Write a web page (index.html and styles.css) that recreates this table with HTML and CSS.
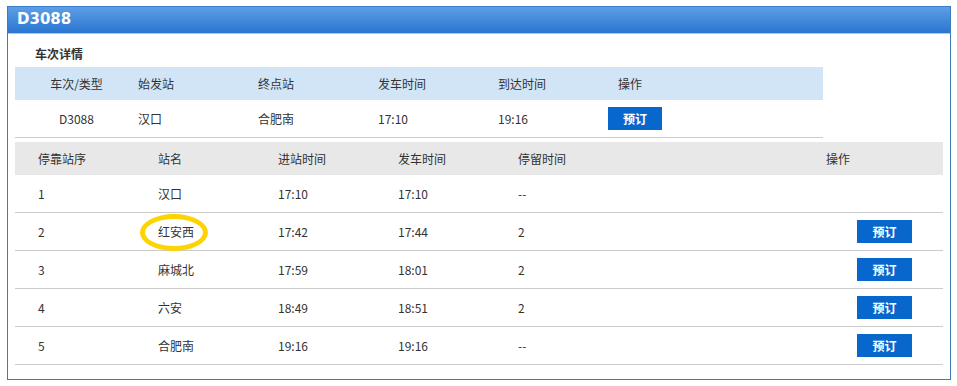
FILE: index.html
```html
<!DOCTYPE html>
<html lang="zh-CN">
<head>
<meta charset="utf-8">
<title>D3088</title>
<link rel="stylesheet" href="styles.css">
</head>
<body>
<div class="panel">
  <div class="panel-head">D3088</div>
  <div class="panel-body">
    <div class="section-title">车次详情</div>
    <div class="train-table">
      <div class="t1-row t1-head">
        <div class="c-center">车次/类型</div>
        <div>始发站</div>
        <div>终点站</div>
        <div>发车时间</div>
        <div>到达时间</div>
        <div class="op-head">操作</div>
      </div>
      <div class="t1-row t1-data">
        <div class="c-center">D3088</div>
        <div>汉口</div>
        <div>合肥南</div>
        <div>17:10</div>
        <div>19:16</div>
        <div><button class="btn">预订</button></div>
      </div>
    </div>

    <div class="stop-table">
      <div class="t2-row t2-head">
        <div>停靠站序</div>
        <div>站名</div>
        <div>进站时间</div>
        <div>发车时间</div>
        <div>停留时间</div>
        <div></div>
        <div>操作</div>
      </div>
      <div class="t2-row">
        <div>1</div><div>汉口</div><div>17:10</div><div>17:10</div><div>--</div><div></div><div></div>
      </div>
      <div class="t2-row">
        <div>2</div><div><span class="circled">红安西</span></div><div>17:42</div><div>17:44</div><div>2</div><div></div><div><button class="btn btn-row">预订</button></div>
      </div>
      <div class="t2-row">
        <div>3</div><div>麻城北</div><div>17:59</div><div>18:01</div><div>2</div><div></div><div><button class="btn btn-row">预订</button></div>
      </div>
      <div class="t2-row">
        <div>4</div><div>六安</div><div>18:49</div><div>18:51</div><div>2</div><div></div><div><button class="btn btn-row">预订</button></div>
      </div>
      <div class="t2-row">
        <div>5</div><div>合肥南</div><div>19:16</div><div>19:16</div><div>--</div><div></div><div><button class="btn btn-row">预订</button></div>
      </div>
    </div>
  </div>
</div>
</body>
</html>
```

FILE: styles.css
```css
*, *::before, *::after { box-sizing: border-box; }

body {
  margin: 0;
  padding: 6px 0 0 7px;
  background: #ffffff;
  font-family: "Microsoft YaHei", "Noto Sans CJK SC", "Noto Sans", sans-serif;
  font-size: 12px;
  color: #333333;
}

.panel {
  width: 944px;
  height: 374px;
  border: 1px solid #3e7bbb;
  border-top-color: #3b7ccc;
}

.panel-head {
  height: 27px;
  padding-left: 9px;
  line-height: 25px;
  background: linear-gradient(#5d9fe4, #2a75d2);
  border-bottom: 1px solid #a9ccf2;
  color: #ffffff;
  font-family: "DejaVu Sans", Verdana, sans-serif;
  font-weight: bold;
  font-size: 15px;
}

.panel-body {
  padding: 0 7px;
}

.section-title {
  height: 33px;
  padding: 12px 0 0 20px;
  line-height: 16px;
  font-weight: bold;
  color: #333;
}

.train-table {
  width: 808px;
}

.t1-row {
  display: grid;
  grid-template-columns: 123px 120px 120px 120px 110px 1fr;
  align-items: center;
}

.t1-head {
  height: 33px;
  background: #d1e5f7;
}

.t1-data {
  height: 38px;
  border-bottom: 1px solid #cccccc;
}

.c-center { text-align: center; }

.op-head { padding-left: 10px; }

.btn {
  display: block;
  width: 54px;
  height: 23px;
  margin: 0;
  padding: 0;
  border: none;
  background: #0767cc;
  color: #ffffff;
  font-family: inherit;
  font-size: 12px;
  font-weight: bold;
}

.btn-row {
  width: 55px;
  margin-left: 31px;
}

.stop-table {
  width: 928px;
  margin-top: 4px;
}

.t2-row {
  display: grid;
  grid-template-columns: 120px 120px 120px 120px 120px 188px 1fr;
  padding-left: 23px;
  height: 38px;
  align-items: center;
  border-bottom: 1px solid #cccccc;
}

.t2-row.t2-head {
  height: 33px;
  background: #e8e8e8;
  border-bottom: none;
}

.circled {
  position: relative;
  display: inline-block;
  line-height: 16px;
}

.circled::before {
  content: "";
  position: absolute;
  left: -18px;
  top: -10px;
  width: 68px;
  height: 37px;
  border: 5px solid #fdd402;
  border-radius: 50%;
}
```
